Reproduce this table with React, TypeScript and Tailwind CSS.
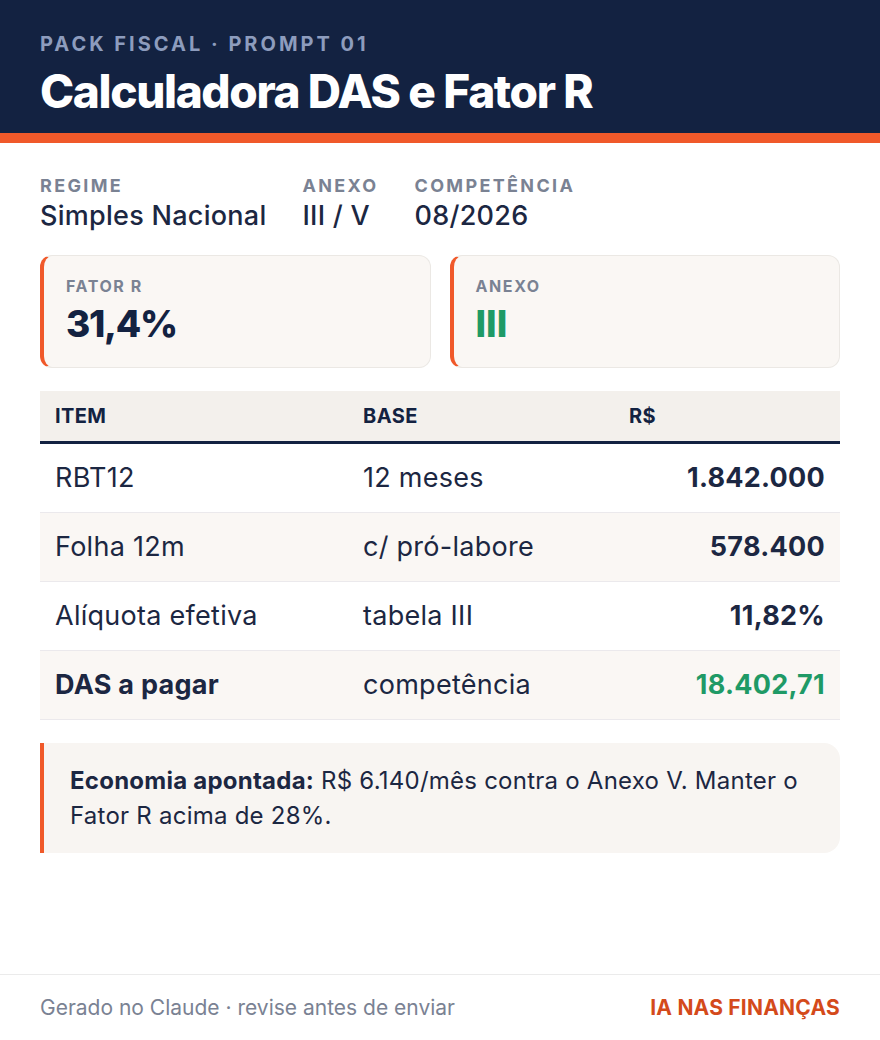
import React from "react";

const rows = [
  { item: "RBT12", base: "12 meses", value: "1.842.000", strong: false, alt: false },
  { item: "Folha 12m", base: "c/ pró-labore", value: "578.400", strong: false, alt: true },
  { item: "Alíquota efetiva", base: "tabela III", value: "11,82%", strong: false, alt: false },
  { item: "DAS a pagar", base: "competência", value: "18.402,71", strong: true, alt: true },
];

const App = () => {
  return (
    <div className="w-[880px] h-[1040px] flex flex-col bg-white font-['Inter',sans-serif] text-[#1c2742]">
      {/* header */}
      <div className="bg-[#132241] px-10 pt-[31px] pb-[17px]">
        <div className="text-[20px] font-bold tracking-[0.15em] text-[#8d9cbd] leading-[26px]">
          PACK FISCAL · PROMPT 01
        </div>
        <h1 className="mt-[9px] text-[46px] font-extrabold tracking-[-0.03em] text-white leading-[50px]">
          Calculadora DAS e Fator R
        </h1>
      </div>
      <div className="h-[10px] bg-[#f0592a]" />

      <div className="px-10 pt-[32px] flex-1 flex flex-col">
        {/* meta */}
        <div className="flex gap-9">
          <div>
            <div className="text-[18px] font-bold tracking-[0.13em] text-[#7a8293] leading-[22px]">REGIME</div>
            <div className="mt-[3px] text-[27px] font-medium tracking-[0.01em] leading-[32px]">Simples Nacional</div>
          </div>
          <div>
            <div className="text-[18px] font-bold tracking-[0.13em] text-[#7a8293] leading-[22px]">ANEXO</div>
            <div className="mt-[3px] text-[27px] font-medium tracking-[0.01em] leading-[32px]">III / V</div>
          </div>
          <div>
            <div className="text-[18px] font-bold tracking-[0.13em] text-[#7a8293] leading-[22px]">COMPETÊNCIA</div>
            <div className="mt-[3px] text-[27px] font-medium tracking-[0.01em] leading-[32px]">08/2026</div>
          </div>
        </div>

        {/* cards */}
        <div className="mt-[23px] grid grid-cols-2 gap-[19px]">
          <div className="h-[113px] rounded-xl border border-[#ebe8e4] border-l-4 border-l-[#f0592a] bg-[#faf7f4] px-[22px] pt-[19px]">
            <div className="text-[16px] font-bold tracking-[0.1em] text-[#7a8293] leading-[22px]">FATOR R</div>
            <div className="mt-[5px] text-[37px] font-extrabold tracking-[-0.035em] leading-[44px] text-[#132241]">31,4%</div>
          </div>
          <div className="h-[113px] rounded-xl border border-[#ebe8e4] border-l-4 border-l-[#f0592a] bg-[#faf7f4] px-[22px] pt-[19px]">
            <div className="text-[16px] font-bold tracking-[0.1em] text-[#7a8293] leading-[22px]">ANEXO</div>
            <div className="mt-[5px] text-[37px] font-extrabold leading-[44px] text-[#1f9a66]">III</div>
          </div>
        </div>

        {/* table */}
        <div className="mt-[23px]">
          <div className="grid grid-cols-[308px_266px_1fr] h-[53px] items-center bg-[#f3f0ec] border-b-[3px] border-[#132241] px-[15px] text-[20px] font-bold tracking-[0.02em] text-[#132241]">
            <div>ITEM</div>
            <div>BASE</div>
            <div>R$</div>
          </div>
          {rows.map((r) => (
            <div
              key={r.item}
              className={`grid grid-cols-[308px_266px_1fr] h-[69px] items-center border-b border-[#ebe9ec] px-[15px] text-[27px] tracking-[0.01em] ${
                r.alt ? "bg-[#faf7f4]" : "bg-white"
              }`}
            >
              <div className={r.strong ? "font-bold" : ""}>{r.item}</div>
              <div>{r.base}</div>
              <div className={`text-right font-bold ${r.strong ? "text-[#1f9a66]" : ""}`}>{r.value}</div>
            </div>
          ))}
        </div>

        {/* callout */}
        <div className="mt-[23px] rounded-r-2xl border-l-4 border-[#f0592a] bg-[#f8f5f2] pl-[26px] pr-[18px] py-[20px] text-[24px] tracking-[0.01em] leading-[35px]">
          <span className="font-bold">Economia apontada:</span> R$ 6.140/mês contra o Anexo V. Manter o Fator R acima de 28%.
        </div>
      </div>

      {/* footer */}
      <div className="h-[66px] border-t border-[#ebebeb] px-10 flex items-center justify-between text-[21px]">
        <span className="text-[#7a8293]">Gerado no Claude · revise antes de enviar</span>
        <span className="font-bold tracking-[0.01em] text-[#d44a1b]">IA NAS FINANÇAS</span>
      </div>
    </div>
  );
};

export default App;
